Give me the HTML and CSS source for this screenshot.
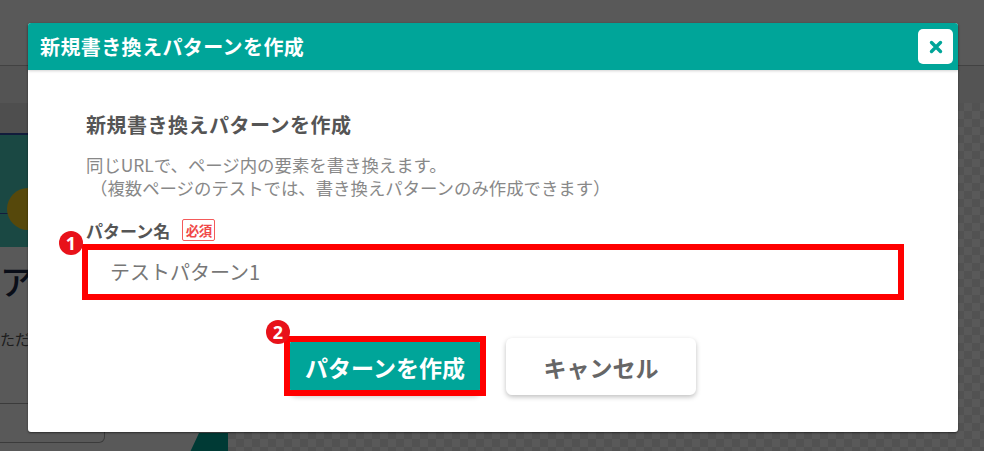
FILE: index.html
```html
<!DOCTYPE html>
<html lang="ja">
<head>
<meta charset="utf-8">
<title>新規書き換えパターンを作成</title>
<link rel="stylesheet" href="styles.css">
</head>
<body>
<div class="page">
  <div class="topbar"></div>
  <div class="subbar"></div>
  <div class="workspace">
    <aside class="sidepanel">
      <div class="side-top"></div>
      <div class="banner">
        <div class="banner-line"></div>
        <div class="banner-coin"></div>
      </div>
      <div class="side-heading">アクセス</div>
      <div class="side-text">ただいま</div>
      <div class="side-box"></div>
      <div class="side-tab"></div>
    </aside>
    <div class="canvas"></div>
  </div>
</div>
<div class="backdrop"></div>

<div class="modal" role="dialog" aria-labelledby="modal-title">
  <div class="modal-header">
    <div class="modal-title" id="modal-title">新規書き換えパターンを作成</div>
    <button class="close-btn" aria-label="閉じる">
      <svg width="16" height="16" viewBox="0 0 16 16"><path d="M3.5 3.5 L12.5 12.5 M12.5 3.5 L3.5 12.5" stroke="#00a599" stroke-width="3.4" stroke-linecap="round" fill="none"/></svg>
    </button>
  </div>
  <div class="modal-body">
    <h2 class="body-title">新規書き換えパターンを作成</h2>
    <p class="desc">同じURLで、ページ内の要素を書き換えます。<br><span class="desc-paren">（複数ページのテストでは、書き換えパターンのみ作成できます）</span></p>
    <div class="label-row">
      <span class="field-label">パターン名</span>
      <span class="badge">必須</span>
    </div>
    <div class="input-wrap">
      <input class="text-input" type="text" value="テストパターン1">
      <div class="annot-box annot-input"></div>
      <div class="annot-num num-1">1</div>
    </div>
    <div class="actions">
      <div class="btn-wrap">
        <button class="btn btn-primary">パターンを作成</button>
        <div class="annot-box annot-btn"></div>
        <div class="annot-num num-2">2</div>
      </div>
      <button class="btn btn-secondary">キャンセル</button>
    </div>
  </div>
</div>
</body>
</html>
```

FILE: styles.css
```css
html, body {
  margin: 0;
  padding: 0;
}
body {
  width: 984px;
  height: 451px;
  overflow: hidden;
  position: relative;
  background: #fff;
  font-family: "Noto Sans CJK JP", "Noto Sans", sans-serif;
}

/* background page (under the backdrop) */
.page {
  display: flex;
  flex-direction: column;
  height: 451px;
}
.topbar {
  height: 65px;
  background: #fff;
  border-bottom: 1px solid #bdbdbd;
}
.subbar {
  height: 37px;
  background: #f1f1f1;
}
.workspace {
  flex: 1;
  display: grid;
  grid-template-columns: 228px 1fr;
}
.sidepanel {
  background: #fff;
  display: flex;
  flex-direction: column;
  position: relative;
  overflow: hidden;
}
.side-top {
  height: 30px;
  background: #dedede;
}
.banner {
  height: 114px;
  background: #4bcfc0;
  border-top: 2px solid #3552a8;
  box-sizing: border-box;
  position: relative;
}
.banner-line {
  position: absolute;
  left: 0;
  right: 0;
  top: 78px;
  height: 1px;
  background: #3552a8;
}
.banner-coin {
  position: absolute;
  left: 7px;
  top: 53px;
  width: 42px;
  height: 42px;
  border-radius: 50%;
  background: #f5cf20;
}
.side-heading {
  margin-top: 14px;
  font-size: 34px;
  line-height: 40px;
  color: #1d2a45;
  font-weight: 500;
}
.side-text {
  margin-top: 28px;
  font-size: 15px;
  line-height: 20px;
  color: #555;
}
.side-box {
  margin-top: 54px;
  width: 104px;
  height: 38px;
  border: 1px solid #aaa;
  border-left: 0;
  border-radius: 0 6px 6px 0;
  background: #fff;
}
.side-tab {
  position: absolute;
  left: 192px;
  top: 330px;
  width: 50px;
  height: 30px;
  background: #00a599;
  transform: skewX(-25deg);
}
.canvas {
  background: repeating-conic-gradient(#ececec 0 25%, #ffffff 0 50%) 0 0 / 16px 16px;
}
.backdrop {
  position: absolute;
  inset: 0;
  background: rgba(0, 0, 0, 0.65);
}

/* modal */
.modal {
  position: absolute;
  left: 28px;
  top: 23px;
  width: 930px;
  height: 409px;
  background: #fff;
  border-radius: 3px;
  box-shadow: 0 1px 2px rgba(0, 0, 0, 0.5);
}
.modal-header {
  height: 47px;
  background: #00a599;
  display: flex;
  align-items: center;
  justify-content: space-between;
  padding: 0 5px 0 12px;
  border-radius: 3px 3px 0 0;
  box-shadow: 0 1px 3px rgba(0, 0, 0, 0.18);
  position: relative;
}
.modal-title {
  color: #fff;
  font-size: 20px;
  font-weight: 700;
  letter-spacing: 0.4px;
}
.close-btn {
  width: 35px;
  height: 35px;
  background: #fff;
  border: 0;
  border-radius: 5px;
  padding: 0;
  display: flex;
  align-items: center;
  justify-content: center;
}
.modal-body {
  padding: 41px 58px 0;
}
.body-title {
  margin: 0;
  font-size: 20px;
  line-height: 28px;
  font-weight: 700;
  color: #555;
  letter-spacing: 0.5px;
}
.desc {
  margin: 14px 0 0;
  font-size: 17.4px;
  line-height: 23px;
  color: #888;
}
.desc-paren {
  margin-left: 4px;
}
.label-row {
  margin-top: 19px;
  height: 24px;
  display: flex;
  align-items: center;
  gap: 12px;
}
.field-label {
  font-size: 17px;
  font-weight: 700;
  color: #555;
}
.badge {
  width: 33px;
  height: 22px;
  box-sizing: border-box;
  border: 1px solid #f45a5a;
  border-radius: 2px;
  color: #f04848;
  font-size: 13.5px;
  font-weight: 700;
  line-height: 20px;
  text-align: center;
  letter-spacing: -0.5px;
}
.input-wrap {
  position: relative;
  margin-top: 6px;
}
.text-input {
  display: block;
  width: 100%;
  height: 48px;
  box-sizing: border-box;
  border: 0;
  border-bottom: 1px solid #cfcfcf;
  box-shadow: 0 1px 2px rgba(0, 0, 0, 0.15);
  padding: 0 0 0 24px;
  font-family: "Noto Sans CJK JP", "Noto Sans", sans-serif;
  font-size: 20px;
  color: #777;
  background: #fff;
  outline: none;
}
.annot-box {
  position: absolute;
  border: 6px solid #ff0000;
  pointer-events: none;
}
.annot-input {
  inset: -4px;
}
.annot-num {
  position: absolute;
  width: 24px;
  height: 24px;
  border-radius: 50%;
  background: #e8121a;
  color: #fff;
  font-family: "Noto Sans", sans-serif;
  font-weight: 700;
  font-size: 18px;
  line-height: 24px;
  text-align: center;
}
.num-1 {
  left: -27px;
  top: -17px;
}
.actions {
  margin-top: 42px;
  display: flex;
  justify-content: center;
  gap: 26px;
}
.btn-wrap {
  position: relative;
}
.btn {
  width: 190px;
  height: 57px;
  border: 0;
  border-radius: 6px;
  font-family: "Noto Sans CJK JP", "Noto Sans", sans-serif;
  font-size: 23px;
  font-weight: 700;
  padding: 0;
}
.btn-primary {
  display: block;
  background: #00a599;
  color: #fff;
  box-shadow: 0 2px 5px rgba(0, 0, 0, 0.2);
}
.btn-secondary {
  background: #fff;
  color: #666;
  box-shadow: 0 2px 5px rgba(0, 0, 0, 0.25);
}
.annot-btn {
  left: -6px;
  right: -6px;
  top: -2px;
  bottom: -1px;
}
.num-2 {
  left: -24px;
  top: -18px;
}
```
